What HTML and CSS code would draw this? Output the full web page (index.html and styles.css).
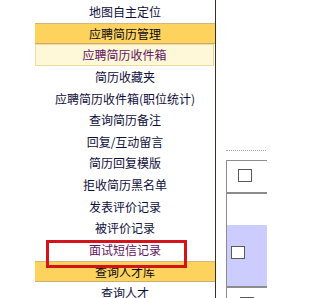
FILE: index.html
```html
<!DOCTYPE html>
<html lang="zh-CN">
<head>
<meta charset="utf-8">
<title>菜单</title>
<link rel="stylesheet" href="styles.css">
</head>
<body>
<div class="page">
  <div class="gutter"></div>
  <ul class="menu">
    <li class="item">地图自主定位</li>
    <li class="head">应聘简历管理</li>
    <li class="item current">应聘简历收件箱</li>
    <li class="item">简历收藏夹</li>
    <li class="item">应聘简历收件箱(职位统计)</li>
    <li class="item">查询简历备注</li>
    <li class="item">回复/互动留言</li>
    <li class="item">简历回复模版</li>
    <li class="item">拒收简历黑名单</li>
    <li class="item">发表评价记录</li>
    <li class="item">被评价记录</li>
    <li class="item visited marked">面试短信记录<span class="mark"></span></li>
    <li class="head">查询人才库</li>
    <li class="item">查询人才</li>
  </ul>
  <div class="vline"></div>
  <div class="main">
    <div class="dots"></div>
    <div class="grid">
      <div class="row r1"><span class="chk"></span></div>
      <div class="row r2"></div>
      <div class="row r3"><span class="chk"></span></div>
      <div class="row r4"><span class="chk"></span></div>
    </div>
  </div>
</div>
</body>
</html>
```

FILE: styles.css
```css
html, body {
  margin: 0;
  padding: 0;
  background: #ffffff;
  overflow: hidden;
}
body {
  font-family: "Noto Sans CJK SC", "Noto Sans", sans-serif;
  font-size: 12px;
  color: #0e0e3c;
}
.page {
  display: flex;
  height: 298px;
  overflow: hidden;
}
.gutter {
  width: 35px;
  flex: none;
}
.menu {
  list-style: none;
  margin: 0;
  padding: 1px 0 0 0;
  width: 180px;
  flex: none;
}
.menu li {
  height: 21.65px;
  line-height: 21px;
  text-align: center;
  box-sizing: border-box;
  white-space: nowrap;
}
.head {
  background: #fdd35d;
  border-top: 1px solid #d2b77c;
  border-bottom: 1px solid #c9ad78;
  color: #0a0a18;
  line-height: 19px !important;
}
.current {
  background: #fff8d8;
  border: 1px solid #efdc9c;
  border-right-color: #e8d490;
  color: #621462;
  line-height: 20px !important;
  margin-right: 1px;
}
.visited {
  color: #621462;
}
.marked {
  position: relative;
}
.mark {
  position: absolute;
  left: 11px;
  top: 1px;
  width: 141px;
  height: 28px;
  box-sizing: border-box;
  border: 3.5px solid #d4141a;
  z-index: 2;
}
.vline {
  width: 1px;
  flex: none;
  background: #3e2c1c;
}
.main {
  flex: 1;
  margin-left: 10px;
  overflow: hidden;
}
.dots {
  margin-top: 150px;
  border-top: 1px dotted #a0a0b0;
  width: 40px;
}
.grid {
  margin-top: 9px;
  border-left: 1px solid #8c8c8c;
  border-top: 1px solid #8c8c8c;
  width: 40px;
}
.row {
  box-sizing: border-box;
  position: relative;
}
.r1 {
  height: 33px;
  border-bottom: 2px solid #8c8c8c;
  padding: 8px 0 0 11px;
}
.r2 {
  height: 31px;
}
.r3 {
  height: 63px;
  background: #ccccfe;
  border-bottom: 2px solid #8c8c8c;
  padding: 21px 0 0 4px;
}
.r4 {
  height: 20px;
  padding: 9px 0 0 13px;
}
.chk {
  display: block;
  width: 14px;
  height: 13px;
  box-sizing: border-box;
  border: 1px solid #5a5a5a;
  background: #ffffff;
}
```
